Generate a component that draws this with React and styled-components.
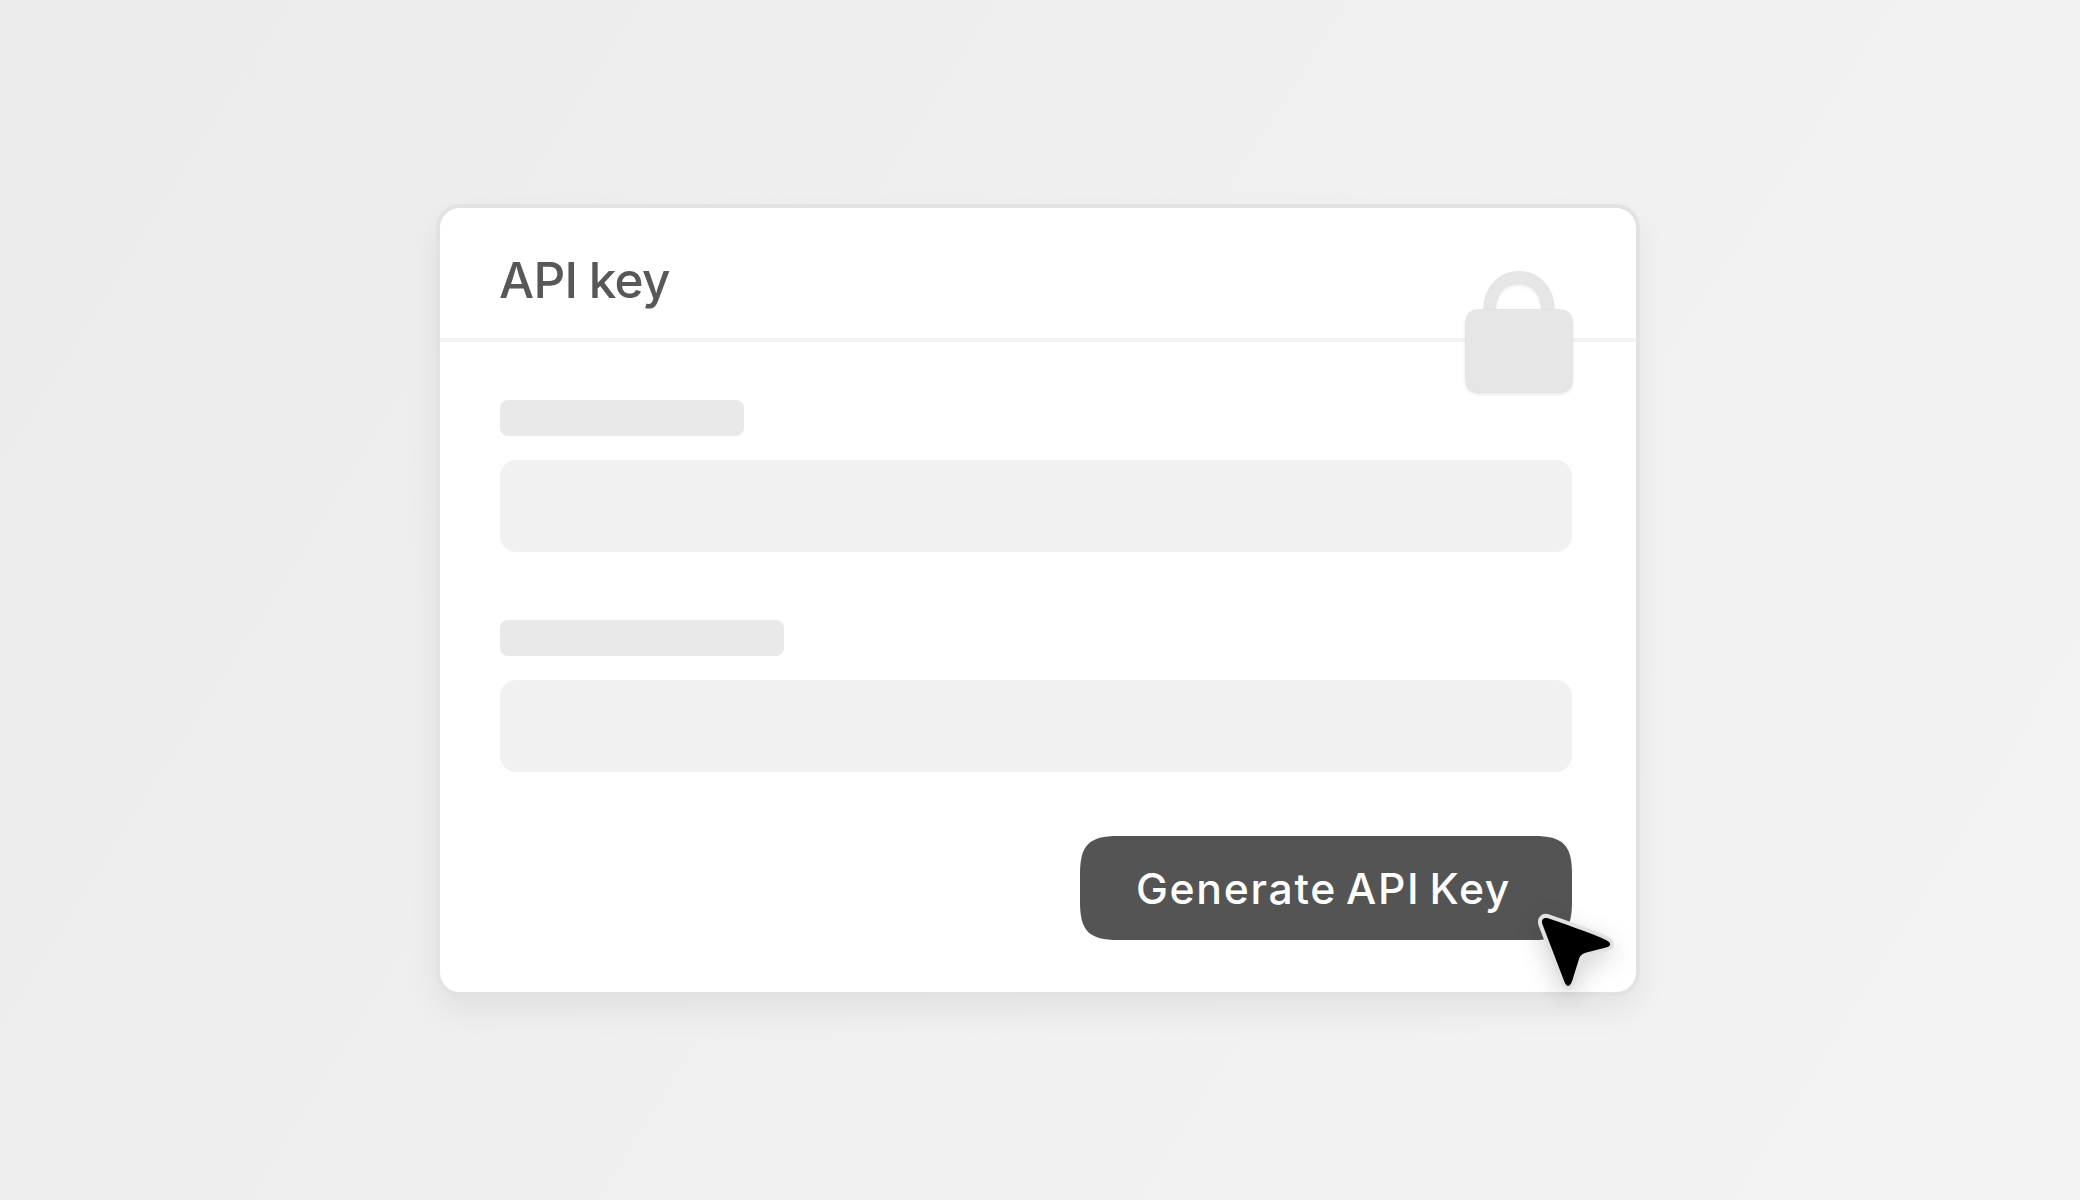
import React from 'react';
import styled, { createGlobalStyle } from 'styled-components';

const GlobalStyle = createGlobalStyle`
  * {
    box-sizing: border-box;
  }

  body {
    margin: 0;
    font-family: Inter, 'Liberation Sans', sans-serif;
  }
`;

const Page = styled.main`
  display: flex;
  justify-content: center;
  width: 100%;
  height: 1200px;
  padding-top: 204px;
  padding-right: 4px;
  overflow: hidden;
  background: linear-gradient(122deg, #ebebeb 0%, #f0f0f0 50%, #f3f3f3 100%);
`;

const Card = styled.section`
  position: relative;
  display: flex;
  flex-direction: column;
  width: 1204px;
  height: 792px;
  border: 4px solid #e2e2e2;
  border-radius: 24px;
  background: #fff;
  box-shadow: 0 16px 32px rgba(0, 0, 0, 0.06);
`;

const CardHeader = styled.header`
  display: flex;
  align-items: center;
  height: 134px;
  padding: 14px 59px 0;
  border-bottom: 4px solid #f3f3f3;
`;

const Title = styled.h2`
  margin: 0;
  font-size: 49.5px;
  font-weight: 450;
  line-height: 60px;
  letter-spacing: -0.7px;
  word-spacing: -1px;
  color: #585858;
`;

const CardBody = styled.div`
  display: flex;
  flex-direction: column;
  padding: 58px 64px 0 60px;
`;

const Field = styled.div`
  display: flex;
  flex-direction: column;
  gap: 24px;
  margin-bottom: ${props => props.$gap}px;
`;

const FieldLabel = styled.div`
  width: ${props => props.$width}px;
  height: 36px;
  border-radius: 8px;
  background: #e9e9e9;
`;

const FieldInput = styled.div`
  height: 92px;
  border-radius: 16px;
  background: #f1f1f1;
`;

const Button = styled.button`
  align-self: flex-end;
  width: 492px;
  height: 104px;
  padding: 1px 5px 0 0;
  border: none;
  background: #545454;
  /* smooth corners */
  clip-path: path('M0 38C0 9 9 0 38 0H454C483 0 492 9 492 38V66C492 95 483 104 454 104H38C9 104 0 95 0 66Z');
  color: #fff;
  font-family: inherit;
  font-size: 42.7px;
  font-weight: 500;
  letter-spacing: 1.7px;
  word-spacing: -4px;
  white-space: nowrap;
`;

const LockIcon = styled.svg`
  position: absolute;
  top: 52px;
  right: 53px;
  width: 130px;
  height: 144px;
  filter: drop-shadow(0 2px 1.5px rgba(0, 0, 0, 0.08));
`;

const CursorIcon = styled.svg`
  position: absolute;
  top: 692px;
  left: 1080px;
  width: 110px;
  height: 110px;
  overflow: visible;
  filter: drop-shadow(0 8px 12px rgba(0, 0, 0, 0.16));
`;

function Lock() {
  return (
    <LockIcon viewBox="0 0 130 144" fill="#e6e6e6" stroke="#e0e0e0" strokeWidth="0.8">
      <path d="M31 50C31 27 46 11.5 66 11.5S101 27 101 50H88.500C88.500 33.500 79.500 23.500 65.500 23.500S42.500 33.500 42.500 50Z" />
      <path d="M12.500 65.500C12.500 53.500 16.500 49.500 28.500 49.500H103.500C115.500 49.500 119.500 53.500 119.500 65.500V116.500C119.500 128.500 115.500 132.500 103.500 132.500H28.500C16.500 132.500 12.500 128.500 12.500 116.500Z" />
    </LockIcon>
  );
}

const arrow =
  'M22.4 24.2C20.900 19.600 23.500 17 28 18.200C48 25 66 31.500 80 37.200C86.500 39.800 90.200 42 90.200 44.200C90.200 46.600 86.500 47.600 80 49L66.500 52.400C61.500 54 59.600 56 58.700 60L54 75C52 82 50.500 86 48 86C46.300 86 45.300 84 44.200 81.300Z';

function Cursor() {
  return (
    <CursorIcon viewBox="0 0 110 110">
      <path d={arrow} fill="#e2e2e2" stroke="#e2e2e2" strokeWidth="8" strokeLinejoin="round" />
      <path d={arrow} fill="#000" />
    </CursorIcon>
  );
}

function ApiKeyCard() {
  return (
    <Page>
      <GlobalStyle />
      <Card>
        <CardHeader>
          <Title>API key</Title>
        </CardHeader>
        <CardBody>
          <Field $gap={68}>
            <FieldLabel $width={244} />
            <FieldInput />
          </Field>
          <Field $gap={64}>
            <FieldLabel $width={284} />
            <FieldInput />
          </Field>
          <Button>Generate API Key</Button>
        </CardBody>
        <Lock />
        <Cursor />
      </Card>
    </Page>
  );
}

export default ApiKeyCard;
